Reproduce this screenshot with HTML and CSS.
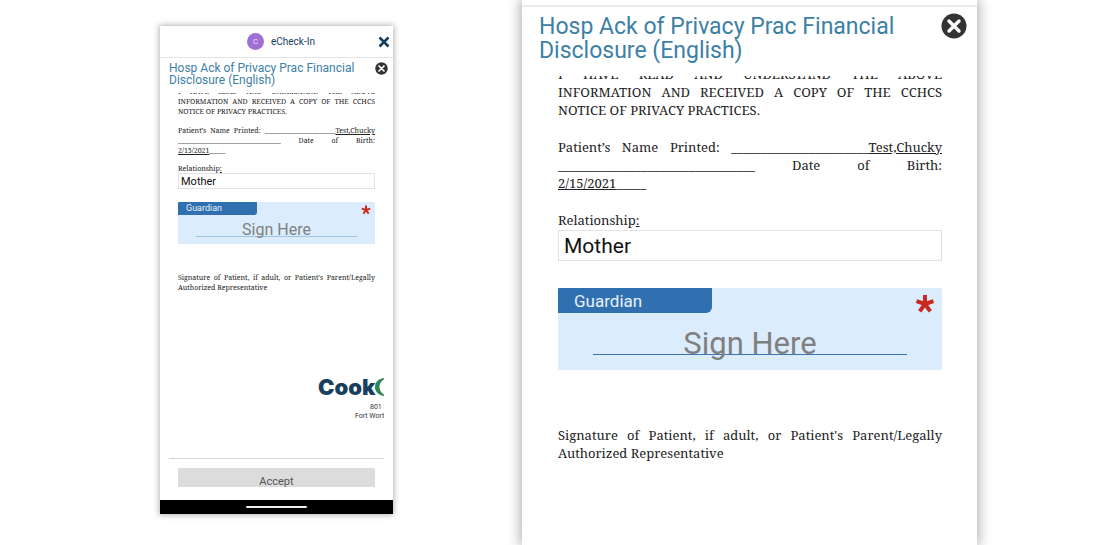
FILE: index.html
```html
<!DOCTYPE html>
<html lang="en">
<head>
<meta charset="utf-8">
<title>eCheck-In</title>
<link rel="stylesheet" href="styles.css">
</head>
<body>
<main class="stage">
  <section class="phone">
    <header class="app-bar">
      <span class="avatar">C</span>
      <span class="app-name">eCheck-In</span>
      <button class="app-close" type="button" aria-label="Close eCheck-In">
        <svg viewBox="0 0 12 12"><path d="M1.500 1.500l9 9M10.500 1.500l-9 9" stroke="#173d61" stroke-width="2.600"/></svg>
      </button>
    </header>
    <div class="title-bar">
      <h1 class="title">Hosp Ack of Privacy Prac Financial<br>Disclosure (English)</h1>
      <button class="dismiss" type="button" aria-label="Close document">
        <svg viewBox="0 0 26 26"><circle cx="13" cy="13" r="12.500" fill="#333"/><path d="M8 8l10 10M18 8L8 18" stroke="#fff" stroke-width="3.400" stroke-linecap="round"/></svg>
      </button>
    </div>
    <div class="viewport">
      <article class="document">
        <p class="para clipped"><span class="line">I HAVE READ AND UNDERSTAND THE ABOVE</span><span class="line">INFORMATION AND RECEIVED A COPY OF THE CCHCS</span><span class="last">NOTICE OF PRIVACY PRACTICES.</span></p>
        <p class="para"><span class="line">Patient’s Name Printed: <span class="nobreak">______________________<u>Test,Chucky</u></span></span><span class="line">________________________________ Date of Birth:</span><span class="last"><u>2/15/2021</u>_____</span></p>
        <label class="label" for="relation-a">Relationship<u>:</u></label>
        <input class="field" id="relation-a" type="text" value="Mother">
        <div class="signature">
          <span class="role">Guardian</span>
          <span class="required">
            <svg viewBox="0 0 20 20"><path d="M10 10V1M10 10L1.500 7.200M10 10l8.500-2.800M10 10l-5.300 7.400M10 10l5.300 7.400" stroke="#c92a20" stroke-width="4"/></svg>
          </span>
          <button class="sign" type="button">Sign Here</button>
        </div>
        <p class="para"><span class="line">Signature of Patient, if adult, or Patient's Parent/Legally</span><span class="last">Authorized Representative</span></p>
      </article>
      <div class="letterhead">
        <div class="brand">Cook<svg class="crescent" viewBox="0 0 18 18"><path d="M11 0C4 0 0 4 0 9s4 9 11 9C6 15 4.500 12.500 4.500 9S6 3 11 0z" fill="#2f8558"/></svg></div>
        <div class="street">801 S</div>
        <div class="city">Fort Worth</div>
      </div>
    </div>
    <footer class="actions">
      <button class="accept" type="button">Accept</button>
    </footer>
    <div class="system-bar"><span class="handle"></span></div>
  </section>

  <section class="phone large">
    <div class="title-bar">
      <h2 class="title">Hosp Ack of Privacy Prac Financial<br>Disclosure (English)</h2>
      <button class="dismiss" type="button" aria-label="Close document">
        <svg viewBox="0 0 26 26"><circle cx="13" cy="13" r="12.500" fill="#333"/><path d="M8 8l10 10M18 8L8 18" stroke="#fff" stroke-width="3.400" stroke-linecap="round"/></svg>
      </button>
    </div>
    <div class="viewport">
      <article class="document">
        <p class="para clipped"><span class="line">I HAVE READ AND UNDERSTAND THE ABOVE</span><span class="line">INFORMATION AND RECEIVED A COPY OF THE CCHCS</span><span class="last">NOTICE OF PRIVACY PRACTICES.</span></p>
        <p class="para"><span class="line">Patient’s Name Printed: <span class="nobreak">_______________________<u>Test,Chucky</u></span></span><span class="line">_________________________________ Date of Birth:</span><span class="last"><u>2/15/2021</u>_____</span></p>
        <label class="label" for="relation-b">Relationship<u>:</u></label>
        <input class="field" id="relation-b" type="text" value="Mother">
        <div class="signature">
          <span class="role">Guardian</span>
          <span class="required">
            <svg viewBox="0 0 20 20"><path d="M10 10V1M10 10L1.500 7.200M10 10l8.500-2.800M10 10l-5.300 7.400M10 10l5.300 7.400" stroke="#c92a20" stroke-width="4"/></svg>
          </span>
          <button class="sign" type="button">Sign Here</button>
        </div>
        <p class="para"><span class="line">Signature of Patient, if adult, or Patient's Parent/Legally</span><span class="last">Authorized Representative</span></p>
      </article>
    </div>
  </section>
</main>
</body>
</html>
```
FILE: styles.css
```css
* { box-sizing: border-box; }

body {
  margin: 0;
  background: #fff;
  font-family: Roboto, sans-serif;
}

button { font-family: inherit; border: 0; padding: 0; background: none; }
svg { display: block; width: 100%; height: 100%; }
h1, h2, p { margin: 0; }

.stage {
  display: grid;
  grid-template-columns:
    minmax(0, 160fr) minmax(0, 233fr) minmax(0, 129fr)
    minmax(0, 455fr) minmax(0, 128fr);
  height: 100vh;
  overflow: hidden;
}

/* Small phone: base sizes */
.phone {
  --title: 12px;
  --title-line: 12px;
  --text: 7px;
  --leading: 10px;
  --gap: 9px;
  --inset: 9px;
  grid-column: 2;
  display: flex;
  flex-direction: column;
  margin: 26px 0 31px;
  background: #fff;
  box-shadow: 0 0 6px 1px rgba(0, 0, 0, 0.3);
}

/* Enlarged detail of the same document */
.phone.large {
  --title: 23px;
  --title-line: 24px;
  --text: 13px;
  --leading: 18px;
  --gap: 19px;
  --inset: 17px;
  grid-column: 4;
  margin: 0;
  box-shadow: 0 0 12px 2px rgba(0, 0, 0, 0.3);
}

.app-bar {
  display: flex;
  align-items: center;
  height: 32px;
  padding: 0 3px 0 87px;
  border-bottom: 1px solid #e4e4e4;
  color: #173d61;
}
.avatar {
  width: 17px;
  height: 17px;
  border-radius: 50%;
  background: #a06fd6;
  color: #e9d9fa;
  font-size: 8px;
  line-height: 17px;
  text-align: center;
}
.app-name { margin-left: 7px; font-size: 10px; }
.app-close { width: 12px; height: 12px; margin-left: auto; }

.title-bar {
  display: flex;
  justify-content: space-between;
  align-items: flex-start;
  height: 35px;
  padding: 4px 5px 0 var(--inset);
}
.title {
  color: #3d80a5;
  font-size: var(--title);
  font-weight: 400;
  line-height: var(--title-line);
  white-space: nowrap;
}
.dismiss { width: 13px; height: 13px; }

.large .title-bar {
  height: 71px;
  margin-top: 5px;
  padding: 6px 10px 0 var(--inset);
  border-top: 2px solid #ebebeb;
}
.large .title { padding-top: 2px; }
.large .dismiss { width: 26px; height: 26px; }

.viewport {
  flex: 1;
  min-height: 0;
  margin: 0 var(--inset);
  overflow: hidden;
}
.document { padding: 0 9px; }
.large .document { padding: 0 18px 0 19px; }

.para, .label {
  color: #222;
  font-family: "Noto Serif", "DejaVu Serif Condensed", "DejaVu Serif", serif;
  font-size: var(--text);
  line-height: var(--leading);
}
.para { margin-bottom: var(--gap); }
.clipped { margin-top: -6px; }
.large .clipped { margin-top: -11px; }
.line, .last, .label { display: block; white-space: nowrap; }
.line { text-align: justify; text-align-last: justify; white-space: normal; }
.nobreak { white-space: nowrap; }
.label { line-height: 8px; }
.large .label { line-height: 19px; }

.field {
  display: block;
  width: 100%;
  height: 16px;
  padding: 0 2px;
  border: 1px solid #e2e2e2;
  background: #fff;
  color: #111;
  font: 11px Roboto, sans-serif;
}
.large .field { height: 31px; padding: 0 5px; font-size: 21px; }

.signature {
  display: grid;
  grid-template-columns: 2fr 3fr;
  grid-template-rows: 13px 29px;
  margin: 13px 0 29px;
  border-radius: 1px;
  background: #dbedfc;
}
.role {
  padding-left: 8px;
  border-radius: 1px 0 3px 0;
  background: #3070b0;
  color: #e8f1fa;
  font-size: 9px;
  line-height: 13px;
}
.required { justify-self: end; width: 10px; height: 10px; margin: 3px 4px 0 0; }
.sign {
  grid-column: 1 / -1;
  margin: 0 18px;
  background: linear-gradient(#9cc5e0, #9cc5e0) 0 21px / 100% 1px no-repeat;
  color: #808080;
  font-size: 16px;
  line-height: 30px;
}

.large .signature { grid-template-rows: 25px 57px; margin: 27px 0 56px; }
.large .role { padding-left: 16px; border-bottom-right-radius: 6px; font-size: 17px; line-height: 26px; }
.large .required { width: 20px; height: 20px; margin: 6px 7px 0 0; }
.large .sign {
  margin: 0 35px;
  background: linear-gradient(#3f74b3, #3f74b3) 0 41px / 100% 1px no-repeat;
  font-size: 31px;
  line-height: 62px;
}

.letterhead {
  margin: 82px 0 0 149px;
  color: #333;
  font-size: 7px;
  line-height: 9px;
  white-space: nowrap;
}
.brand {
  display: flex;
  align-items: center;
  height: 24px;
  margin-bottom: 4px;
  color: #183f5f;
  font-family: Inter, Roboto, sans-serif;
  font-size: 22px;
  font-weight: 900;
}
.crescent { flex: none; width: 18px; height: 18px; }
.street { padding-left: 52px; }
.city { padding-left: 37px; }

.actions {
  height: 29px;
  margin: 0 var(--inset) 13px;
  padding: 9px 9px 0;
  border-top: 1px solid #d4d4d4;
  overflow: hidden;
}
.accept {
  width: 100%;
  height: 26px;
  border-radius: 2px;
  background: #dcdcdc;
  color: #555;
  font-size: 11px;
}

.system-bar {
  display: flex;
  justify-content: center;
  align-items: center;
  height: 14px;
  background: #000;
}
.handle { width: 61px; height: 2px; border-radius: 1px; background: #eee; }
```
